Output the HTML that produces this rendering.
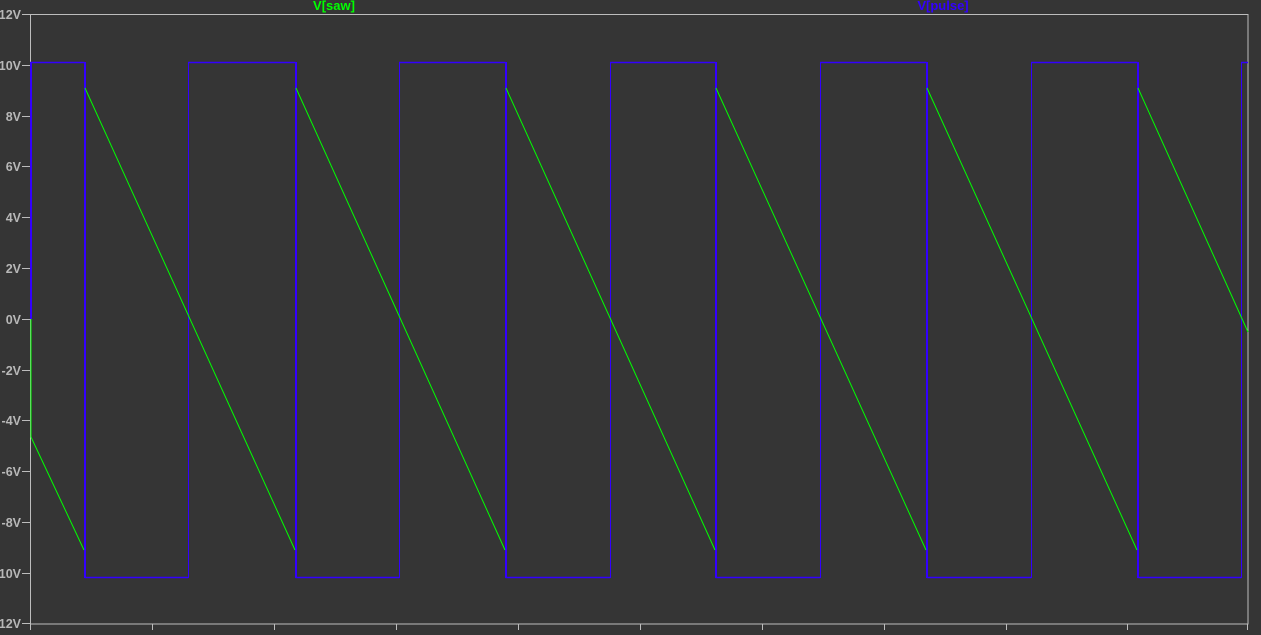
<!DOCTYPE html>
<html><head><style>
html,body{margin:0;padding:0;background:#353535;}
svg{display:block}
text{font-family:"Liberation Sans",sans-serif;}
</style></head><body>
<svg width="1261" height="635" viewBox="0 0 1261 635" xmlns="http://www.w3.org/2000/svg">
<rect width="1261" height="635" fill="#353535"/>
<rect x="30.5" y="14.5" width="1217.5" height="609.5" fill="none" stroke="#bdbdbd" stroke-width="1"/>
<g stroke="#bdbdbd" stroke-width="1">
<path d="M22,14.5H30M22,65.5H30M22,116.5H30M22,166.5H30M22,217.5H30M22,268.5H30M22,319.5H30M22,370.5H30M22,420.5H30M22,471.5H30M22,522.5H30M22,573.5H30M22,623.5H30"/>
<path d="M30.5,624V630M152.5,624V630M274.5,624V630M396.5,624V630M518.5,624V630M640.5,624V630M762.5,624V630M884.5,624V630M1006.5,624V630M1127.5,624V630M1247.5,624V630"/>
</g>
<g fill="#b8b8b8" font-size="12.5" font-weight="bold" text-anchor="end">
<text x="21" y="19">12V</text>
<text x="21" y="70">10V</text>
<text x="21" y="121">8V</text>
<text x="21" y="171">6V</text>
<text x="21" y="222">4V</text>
<text x="21" y="273">2V</text>
<text x="21" y="324">0V</text>
<text x="21" y="375">-2V</text>
<text x="21" y="425">-4V</text>
<text x="21" y="476">-6V</text>
<text x="21" y="527">-8V</text>
<text x="21" y="578">-10V</text>
<text x="21" y="628">-12V</text>
</g>
<text x="334" y="10" fill="#00ff00" font-size="13" font-weight="bold" text-anchor="middle">V[saw]</text>
<text x="943" y="10" fill="#3300ff" font-size="13" font-weight="bold" text-anchor="middle">V[pulse]</text>
<g fill="none" stroke="#3300ff">
<path d="M30,62.5H84.5M84.5,577.5H188.5M188,62.5H295.5M295.5,577.5H399.5M399,62.5H505.5M505.5,577.5H610.5M610,62.5H715.5M715.5,577.5H820.5M820,62.5H926.5M926.5,577.5H1031.5M1031,62.5H1137.5M1137.5,577.5H1241.5M1241,62.5H1248" stroke-width="1.6"/>
<path d="M31,319V62M85,62V578M296,62V578M506,62V578M716,62V578M927,62V578M1138,62V578" stroke-width="2"/>
<path d="M188.5,62V578M399.5,62V578M610.5,62V578M820.5,62V578M1031.5,62V578M1241.5,62V578" stroke-width="1"/>
</g>
<path d="M31,319V437L84,550M85,88L295,550M296,88L505,550M506,88L715,550M716,88L926,550M927,88L1137,550M1138,88L1248,332" fill="none" stroke="#00ff00" stroke-width="1"/>
</svg>
</body></html>
